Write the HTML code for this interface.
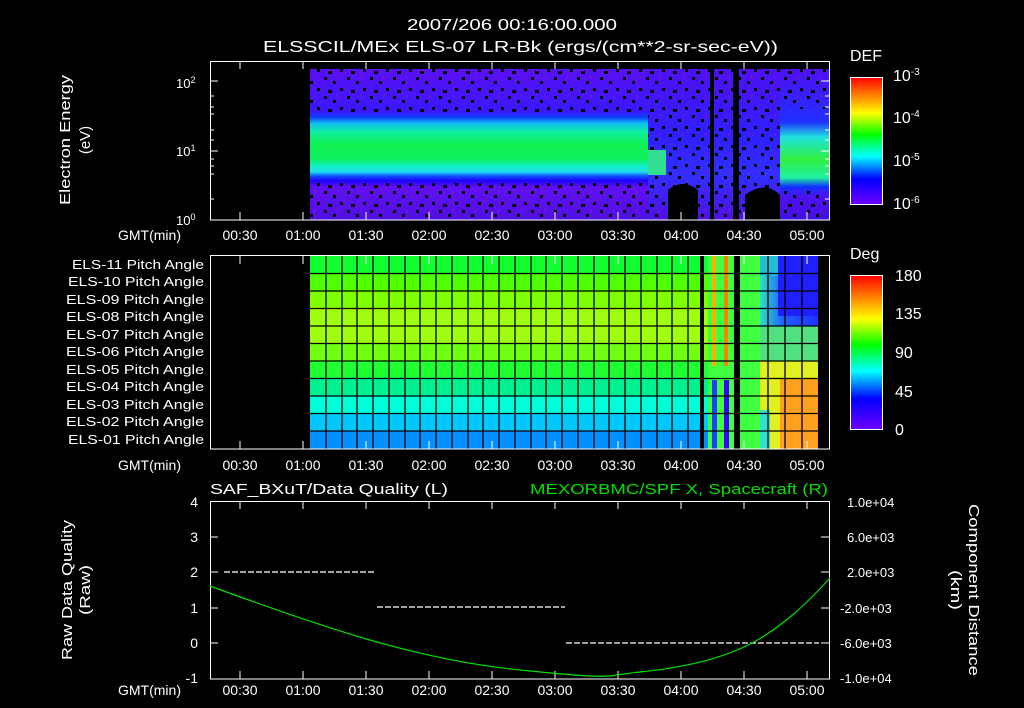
<!DOCTYPE html>
<html><head><meta charset="utf-8"><style>
html,body{margin:0;padding:0;background:#000;}
svg{display:block}
text{font-family:"Liberation Sans",sans-serif;fill:#fff;}
</style></head><body>
<svg width="1024" height="708" viewBox="0 0 1024 708" xmlns="http://www.w3.org/2000/svg">
<defs>
<linearGradient id="band" x1="0" y1="69" x2="0" y2="220" gradientUnits="userSpaceOnUse">
<stop offset="0" stop-color="#5a10f0"/>
<stop offset="0.28" stop-color="#3a18ff"/>
<stop offset="0.32" stop-color="#1040ff"/>
<stop offset="0.36" stop-color="#10c0f0"/>
<stop offset="0.42" stop-color="#10f0a0"/>
<stop offset="0.50" stop-color="#10f050"/>
<stop offset="0.60" stop-color="#10f060"/>
<stop offset="0.64" stop-color="#10f0c0"/>
<stop offset="0.68" stop-color="#20e0f0"/>
<stop offset="0.71" stop-color="#1050ff"/>
<stop offset="0.74" stop-color="#2000ff"/>
<stop offset="0.78" stop-color="#6010f0"/>
<stop offset="1" stop-color="#5010e0"/>
</linearGradient>
<linearGradient id="noise" x1="0" y1="69" x2="0" y2="220" gradientUnits="userSpaceOnUse">
<stop offset="0" stop-color="#5010f0"/>
<stop offset="0.45" stop-color="#3020ff"/>
<stop offset="0.7" stop-color="#3030ff"/>
<stop offset="1" stop-color="#5010e0"/>
</linearGradient>
<linearGradient id="band2" x1="0" y1="69" x2="0" y2="220" gradientUnits="userSpaceOnUse">
<stop offset="0" stop-color="#5010f0"/>
<stop offset="0.35" stop-color="#2030ff"/>
<stop offset="0.45" stop-color="#20e0e0"/>
<stop offset="0.6" stop-color="#30f040"/>
<stop offset="0.72" stop-color="#20f0a0"/>
<stop offset="0.78" stop-color="#1030ff"/>
<stop offset="0.85" stop-color="#5010f0"/>
<stop offset="1" stop-color="#4010e0"/>
</linearGradient>
<pattern id="spk" width="23" height="19" patternUnits="userSpaceOnUse">
<rect x="2" y="1" width="3" height="3" fill="#000"/><rect x="11" y="5" width="3" height="3" fill="#000"/>
<rect x="18" y="12" width="3" height="3" fill="#000"/><rect x="6" y="14" width="4" height="3" fill="#000"/>
<rect x="15" y="0" width="2" height="3" fill="#7010f0"/>
<rect x="8" y="9" width="2" height="2" fill="#2020ff"/>
</pattern>
<linearGradient id="cb1" x1="0" y1="1" x2="0" y2="0">
<stop offset="0" stop-color="#7000ff"/><stop offset="0.2" stop-color="#0000ff"/>
<stop offset="0.38" stop-color="#00ffff"/><stop offset="0.55" stop-color="#00ff00"/>
<stop offset="0.72" stop-color="#ffff00"/><stop offset="0.86" stop-color="#ff8000"/>
<stop offset="1" stop-color="#ff0000"/>
</linearGradient>
<linearGradient id="right2" x1="760" y1="0" x2="818" y2="0" gradientUnits="userSpaceOnUse">
<stop offset="0" stop-color="#30e0c0"/><stop offset="0.4" stop-color="#2060ff"/><stop offset="1" stop-color="#2030ff"/>
</linearGradient>
</defs>

<text x="512" y="30" font-size="16" text-anchor="middle" textLength="210" lengthAdjust="spacingAndGlyphs">2007/206 00:16:00.000</text>
<text x="263" y="52" font-size="16" textLength="515" lengthAdjust="spacingAndGlyphs">ELSSCIL/MEx ELS-07 LR-Bk  (ergs/(cm**2-sr-sec-eV))</text>

<!-- Panel 1 -->
<rect x="310" y="69" width="338" height="151" fill="url(#band)"/>
<rect x="310" y="69" width="338" height="45" fill="url(#spk)"/>
<rect x="310" y="182" width="338" height="38" fill="url(#spk)"/>
<rect x="648" y="69" width="132" height="151" fill="url(#noise)"/>
<rect x="648" y="69" width="132" height="151" fill="url(#spk)"/>
<rect x="648" y="150" width="18" height="25" fill="#30e090"/>
<path d="M668 220V190Q683 178 698 190V220Z" fill="#000"/>
<rect x="710" y="69" width="4" height="151" fill="#000"/>
<rect x="733" y="69" width="6" height="151" fill="#000"/>
<path d="M745 220V195Q765 180 780 195V220Z" fill="#000"/>
<rect x="780" y="69" width="49" height="151" fill="url(#band2)"/>
<rect x="780" y="69" width="49" height="40" fill="url(#spk)"/>
<rect x="780" y="190" width="49" height="30" fill="url(#spk)"/>
<rect x="210.5" y="61.5" width="619" height="158.5" fill="none" stroke="#fff"/>
<g stroke="#fff">
<path d="M210 81h8M210 151h8M210 220h8M210 96h4M210 107h4M210 114h4M210 130h4M210 140h4M210 199h4M210 174h4M210 166h4M210 159h4"/>
<path d="M829 81h-8M829 151h-8M829 96h-4M829 107h-4M829 114h-4M829 130h-4M829 140h-4M829 199h-4M829 174h-4M829 166h-4M829 159h-4"/>
</g>
<text x="176" y="88" font-size="13">10<tspan font-size="9" dy="-5">2</tspan></text>
<text x="176" y="156" font-size="13">10<tspan font-size="9" dy="-5">1</tspan></text>
<text x="176" y="225" font-size="13">10<tspan font-size="9" dy="-5">0</tspan></text>
<text transform="translate(70,140) rotate(-90)" font-size="15" text-anchor="middle" textLength="130" lengthAdjust="spacingAndGlyphs">Electron Energy</text>
<text transform="translate(90,140) rotate(-90)" font-size="15" text-anchor="middle">(eV)</text>
<text x="850" y="61" font-size="16">DEF</text>
<rect x="850.5" y="77.5" width="32" height="127" fill="url(#cb1)" stroke="#fff"/>
<text x="893" y="81" font-size="16">10<tspan font-size="10" dy="-6">-3</tspan></text>
<text x="893" y="123" font-size="16">10<tspan font-size="10" dy="-6">-4</tspan></text>
<text x="893" y="166" font-size="16">10<tspan font-size="10" dy="-6">-5</tspan></text>
<text x="893" y="209" font-size="16">10<tspan font-size="10" dy="-6">-6</tspan></text>

<!-- time labels -->
<g font-size="14" text-anchor="middle">
<text x="240" y="240">00:30</text><text x="303" y="240">01:00</text><text x="366" y="240">01:30</text><text x="429" y="240">02:00</text><text x="492" y="240">02:30</text><text x="555" y="240">03:00</text><text x="618" y="240">03:30</text><text x="681" y="240">04:00</text><text x="744" y="240">04:30</text><text x="807" y="240">05:00</text>
<text x="240" y="470">00:30</text><text x="303" y="470">01:00</text><text x="366" y="470">01:30</text><text x="429" y="470">02:00</text><text x="492" y="470">02:30</text><text x="555" y="470">03:00</text><text x="618" y="470">03:30</text><text x="681" y="470">04:00</text><text x="744" y="470">04:30</text><text x="807" y="470">05:00</text>
<text x="240" y="695">00:30</text><text x="303" y="695">01:00</text><text x="366" y="695">01:30</text><text x="429" y="695">02:00</text><text x="492" y="695">02:30</text><text x="555" y="695">03:00</text><text x="618" y="695">03:30</text><text x="681" y="695">04:00</text><text x="744" y="695">04:30</text><text x="807" y="695">05:00</text>
</g>
<g font-size="14">
<text x="118" y="240">GMT(min)</text><text x="118" y="470">GMT(min)</text><text x="118" y="695">GMT(min)</text>
</g>

<!-- Panel 2 -->
<g>
<rect x="310" y="256" width="398" height="18" fill="#10ff30"/>
<rect x="310" y="273" width="398" height="18" fill="#50ff00"/>
<rect x="310" y="291" width="398" height="18" fill="#80ff00"/>
<rect x="310" y="308" width="398" height="18" fill="#a0ff10"/>
<rect x="310" y="326" width="398" height="18" fill="#a0ff10"/>
<rect x="310" y="343" width="398" height="18" fill="#70ff10"/>
<rect x="310" y="361" width="398" height="18" fill="#20ff30"/>
<rect x="310" y="378" width="398" height="18" fill="#00f090"/>
<rect x="310" y="396" width="398" height="18" fill="#00ffd8"/>
<rect x="310" y="413" width="398" height="18" fill="#00c8ff"/>
<rect x="310" y="431" width="398" height="18" fill="#0090ff"/>
<rect x="708" y="256" width="52" height="193" fill="#40ff40"/>
<rect x="712" y="256" width="4" height="110" fill="#ffb000"/>
<rect x="724" y="256" width="4" height="110" fill="#ff8000"/>
<rect x="712" y="380" width="5" height="69" fill="#2040ff"/>
<rect x="724" y="380" width="5" height="69" fill="#4000ff"/>
<rect x="700" y="256" width="4" height="193" fill="#000"/>
<rect x="734" y="256" width="6" height="193" fill="#000"/>
<rect x="760" y="256" width="58" height="110" fill="url(#right2)"/>
<rect x="760" y="256" width="58" height="20" fill="#20c0d0"/>
<rect x="778" y="256" width="40" height="60" fill="#2020ff"/>
<rect x="760" y="326" width="58" height="35" fill="#50e080"/>
<rect x="760" y="361" width="58" height="88" fill="#e0f020"/>
<rect x="780" y="378" width="38" height="71" fill="#ffa020"/>
<rect x="760" y="410" width="10" height="39" fill="#30e0d0"/>
</g>
<g stroke="#000" stroke-width="1.3">
<path d="M310 273.5H818M310 291H818M310 308.5H818M310 326H818M310 343.5H818M310 361H818M310 378.5H818M310 396H818M310 413.5H818M310 431H818"/>
<path d="M326 256V449M342 256V449M357 256V449M373 256V449M389 256V449M405 256V449M420 256V449M436 256V449M452 256V449M468 256V449M483 256V449M499 256V449M515 256V449M531 256V449M546 256V449M562 256V449M578 256V449M594 256V449M609 256V449M625 256V449M641 256V449M657 256V449M672 256V449M688 256V449M768 256V449M785 256V449M802 256V449"/>
</g>
<rect x="210.5" y="255.5" width="619" height="193.5" fill="none" stroke="#fff"/>
<g font-size="13">
<text x="72" y="269" textLength="132" lengthAdjust="spacingAndGlyphs">ELS-11 Pitch Angle</text><text x="68" y="286" textLength="136" lengthAdjust="spacingAndGlyphs">ELS-10 Pitch Angle</text><text x="66" y="304" textLength="138" lengthAdjust="spacingAndGlyphs">ELS-09 Pitch Angle</text><text x="66" y="321" textLength="138" lengthAdjust="spacingAndGlyphs">ELS-08 Pitch Angle</text><text x="66" y="339" textLength="138" lengthAdjust="spacingAndGlyphs">ELS-07 Pitch Angle</text><text x="66" y="356" textLength="138" lengthAdjust="spacingAndGlyphs">ELS-06 Pitch Angle</text><text x="66" y="374" textLength="138" lengthAdjust="spacingAndGlyphs">ELS-05 Pitch Angle</text><text x="66" y="391" textLength="138" lengthAdjust="spacingAndGlyphs">ELS-04 Pitch Angle</text><text x="66" y="409" textLength="138" lengthAdjust="spacingAndGlyphs">ELS-03 Pitch Angle</text><text x="66" y="426" textLength="138" lengthAdjust="spacingAndGlyphs">ELS-02 Pitch Angle</text><text x="68" y="444" textLength="136" lengthAdjust="spacingAndGlyphs">ELS-01 Pitch Angle</text>
</g>
<text x="850" y="259" font-size="16">Deg</text>
<rect x="850.5" y="275.5" width="32" height="154" fill="url(#cb1)" stroke="#fff"/>
<g font-size="16"><text x="895" y="281">180</text><text x="895" y="319">135</text><text x="895" y="358">90</text><text x="895" y="397">45</text><text x="895" y="435">0</text></g>

<g stroke="#fff">
<path d="M240 61v8M303 61v8M366 61v8M429 61v8M492 61v8M555 61v8M618 61v8M681 61v8M744 61v8M807 61v8M240 220v-8M303 220v-8M366 220v-8M429 220v-8M492 220v-8M555 220v-8M618 220v-8M681 220v-8M744 220v-8M807 220v-8"/>
<path d="M240 256v8M303 256v8M366 256v8M429 256v8M492 256v8M555 256v8M618 256v8M681 256v8M744 256v8M807 256v8M240 449v-8M303 449v-8M366 449v-8M429 449v-8M492 449v-8M555 449v-8M618 449v-8M681 449v-8M744 449v-8M807 449v-8"/>
<path d="M240 501v8M303 501v8M366 501v8M429 501v8M492 501v8M555 501v8M618 501v8M681 501v8M744 501v8M807 501v8M240 679v-8M303 679v-8M366 679v-8M429 679v-8M492 679v-8M555 679v-8M618 679v-8M681 679v-8M744 679v-8M807 679v-8"/>
</g>

<!-- Panel 3 -->
<text x="210" y="494" font-size="15" textLength="238" lengthAdjust="spacingAndGlyphs">SAF_BXuT/Data Quality (L)</text>
<text x="530" y="494" font-size="15" style="fill:#00e000" textLength="298" lengthAdjust="spacingAndGlyphs">MEXORBMC/SPF X, Spacecraft (R)</text>
<rect x="210.5" y="501.5" width="619" height="177.5" fill="none" stroke="#fff"/>
<g stroke="#fff">
<path d="M210 537h8M210 572h8M210 608h8M210 643h8M829 537h-8M829 572h-8M829 608h-8M829 643h-8"/>
</g>
<g font-size="14" text-anchor="end"><text x="198" y="507">4</text><text x="198" y="542">3</text><text x="198" y="577">2</text><text x="198" y="613">1</text><text x="198" y="648">0</text><text x="198" y="683">-1</text></g>
<g font-size="13"><text x="847" y="507">1.0e+04</text><text x="847" y="542">6.0e+03</text><text x="847" y="577">2.0e+03</text><text x="840" y="613">-2.0e+03</text><text x="840" y="648">-6.0e+03</text><text x="840" y="683">-1.0e+04</text></g>
<text transform="translate(72,590) rotate(-90)" font-size="15" text-anchor="middle" textLength="140" lengthAdjust="spacingAndGlyphs">Raw Data Quality</text>
<text transform="translate(90,590) rotate(-90)" font-size="15" text-anchor="middle" textLength="50" lengthAdjust="spacingAndGlyphs">(Raw)</text>
<text transform="translate(969,590) rotate(90)" font-size="15" text-anchor="middle" textLength="172" lengthAdjust="spacingAndGlyphs">Component Distance</text>
<text transform="translate(951,590) rotate(90)" font-size="15" text-anchor="middle" textLength="40" lengthAdjust="spacingAndGlyphs">(km)</text>
<g stroke="#fff" stroke-width="1.2" stroke-dasharray="6 2">
<path d="M224 572H376M377 607H565M566 643H819"/>
</g>
<path d="M210 586 C 330 630, 420 660, 520 670 S 600 676, 640 672 S 720 660, 752 643 S 810 600, 830 578" fill="none" stroke="#00e000" stroke-width="1.2"/>
</svg>
</body></html>
